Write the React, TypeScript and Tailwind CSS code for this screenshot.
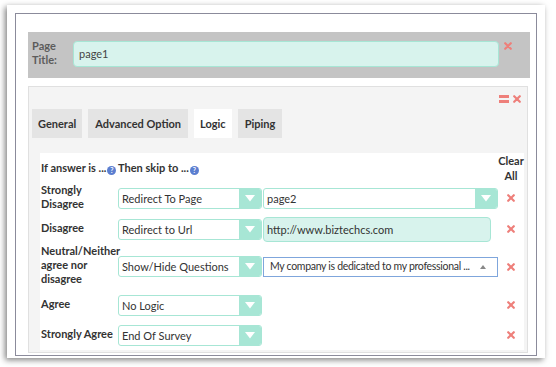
import React from "react";

const font = { fontFamily: "Lato, 'Open Sans', sans-serif" };

function Times({ className = "" }: { className?: string }) {
  return (
    <svg width="8" height="8" viewBox="0 0 8 8" className={className}>
      <path d="M1.2 1.2 L6.8 6.8 M6.8 1.2 L1.2 6.8" stroke="#ee7f7a" strokeWidth="2.2" strokeLinecap="round" />
    </svg>
  );
}

function Help() {
  return (
    <span className="inline-flex w-[9px] h-[9px] rounded-full bg-[#5b7ed0] text-white text-[7px] font-bold leading-none items-center justify-center ml-[1px] relative top-[1px]">
      ?
    </span>
  );
}

function Select({ value, w }: { value: string; w: string }) {
  return (
    <div className={`${w} h-[21px] flex border border-[#a7e6d5] rounded-[3px] bg-white overflow-hidden`}>
      <div className="flex-1 px-[3px] text-[11px] leading-[19px] text-[#333] truncate">{value}</div>
      <div className="w-[22px] bg-[#a7e6d5] flex items-center justify-center">
        <svg width="10" height="7" viewBox="0 0 10 7">
          <path d="M0 0 L10 0 L5 6.5 Z" fill="#ffffff" />
        </svg>
      </div>
    </div>
  );
}

type Row = { label: string[]; h: string; action: string; extra?: React.ReactNode };

const rows: Row[] = [
  {
    label: ["Strongly", "Disagree"],
    h: "h-[30px]",
    action: "Redirect To Page",
    extra: <Select value="page2" w="w-[235px]" />,
  },
  {
    label: ["Disagree"],
    h: "h-[32px]",
    action: "Redirect to Url",
    extra: (
      <div className="w-[228px] h-[25px] rounded-[4px] border border-[#a7e6d5] bg-[#d8f3ed] px-[3px] text-[11px] leading-[23px] text-[#333]">
        http://www.biztechcs.com
      </div>
    ),
  },
  {
    label: ["Neutral/Neither", "agree nor", "disagree"],
    h: "h-[43px]",
    action: "Show/Hide Questions",
    extra: (
      <div className="w-[235px] h-[20px] border border-[#7fa6dc] bg-white flex items-center pl-[6px] pr-[11px] text-[10.5px] text-[#333]">
        <span className="flex-1 whitespace-nowrap tracking-[-0.3px]">My company is dedicated to my professional ...</span>
        <svg width="6" height="4" viewBox="0 0 6 4">
          <path d="M0 4 L3 0 L6 4 Z" fill="#888" />
        </svg>
      </div>
    ),
  },
  { label: ["Agree"], h: "h-[34px]", action: "No Logic" },
  { label: ["Strongly Agree"], h: "h-[26px]", action: "End Of Survey" },
];

export default function App() {
  return (
    <div className="w-[556px] h-[367px] bg-white pt-[5px] pl-[7px] overflow-hidden" style={font}>
      <div className="w-[538px] h-[353px] bg-white p-[8px] pb-[2px] shadow-[-2px_2px_6px_rgba(0,0,0,0.5)]">
        <div className="h-full border border-[#8b8b9b] pt-[18px] pl-[12px]">
          <div className="w-[502px] h-[46px] bg-[#c4c4c4] flex items-start pt-[9px] pl-[4px]">
            <div className="w-[41px] text-[11px] leading-[14px] font-bold text-[#5c5c5c] -mt-[2px]">
              Page
              <br />
              Title:
            </div>
            <div className="w-[426px] h-[26px] rounded-[4px] border border-[#a7e6d5] bg-[#d8f3ed] pl-[5px] text-[11px] leading-[24px] text-[#444]">
              page1
            </div>
            <Times className="ml-[5px] mt-[1px]" />
          </div>

          <div className="relative mt-[8px] w-[500px] h-[267px] border border-[#e0e0e0] bg-[#f4f4f4] pt-[22px]">
            <div className="absolute right-[6px] top-[8px] flex items-center gap-[4px]">
              <div className="flex flex-col gap-[2px]">
                <div className="w-[10px] h-[3px] bg-[#ee7f7a]" />
                <div className="w-[10px] h-[3px] bg-[#ee7f7a]" />
              </div>
              <Times />
            </div>

            <div className="flex gap-[6px] pl-[3px] text-[11px] font-bold text-[#333]">
              <div className="h-[29px] px-[6px] bg-[#e4e4e4] leading-[29px]">General</div>
              <div className="h-[29px] px-[7px] bg-[#e4e4e4] leading-[29px]">Advanced Option</div>
              <div className="h-[29px] px-[6px] bg-white leading-[29px]">Logic</div>
              <div className="h-[29px] px-[7px] bg-[#e4e4e4] leading-[29px]">Piping</div>
            </div>

            <div className="ml-[11px] mt-[15px] w-[484px] bg-white pl-[1px] pb-[2px] text-[11px] text-[#333]">
              <div className="flex items-center h-[30px] font-bold">
                <div className="w-[77px] whitespace-nowrap">
                  If answer is ...<Help />
                </div>
                <div className="w-[380px] whitespace-nowrap">
                  Then skip to ...<Help />
                </div>
                <div className="w-[26px] text-center leading-[15px]">
                  Clear
                  <br />
                  All
                </div>
              </div>

              {rows.map((r) => (
                <div key={r.action} className={`flex items-center ${r.h}`}>
                  <div className="w-[77px] font-bold leading-[14px] -mt-[3px]">
                    {r.label.map((l) => (
                      <div key={l} className="whitespace-nowrap">{l}</div>
                    ))}
                  </div>
                  <Select value={r.action} w="w-[144px]" />
                  <div className="w-[236px] pl-[1px] flex">{r.extra}</div>
                  <div className="w-[26px] flex justify-center">
                    <Times />
                  </div>
                </div>
              ))}
            </div>
          </div>
        </div>
      </div>
    </div>
  );
}
